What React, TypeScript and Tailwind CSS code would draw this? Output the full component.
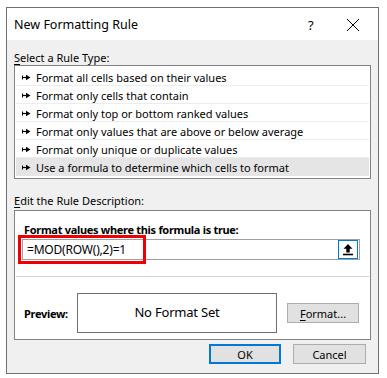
import React from 'react';

const ruleTypes = [
  'Format all cells based on their values',
  'Format only cells that contain',
  'Format only top or bottom ranked values',
  'Format only values that are above or below average',
  'Format only unique or duplicate values',
  'Use a formula to determine which cells to format',
];

const RuleArrow = () => (
  <svg width="9" height="7" viewBox="0 0 9 7" className="shrink-0">
    <path d="M0.5 1.5V5.5" stroke="#000" strokeWidth="1" />
    <path d="M0 3.5H5" stroke="#000" strokeWidth="1.2" />
    <path d="M4 0.8L8.5 3.5L4 6.2Z" fill="#000" />
  </svg>
);

const CollapseIcon = () => (
  <svg width="12" height="13" viewBox="0 0 12 13">
    <path d="M6 1L1.5 5.8H4.3V9.5H7.7V5.8H10.5Z" fill="#000" />
    <path d="M1 11.5H11" stroke="#000" strokeWidth="1.6" />
  </svg>
);

const App: React.FC = () => {
  return (
    <div
      className="w-[387px] h-[378px] bg-white pt-[7px] pl-[6px] text-[11px] text-black"
      style={{ fontFamily: '"Segoe UI", "Noto Sans", sans-serif' }}
    >
      <div className="w-[373px] h-[367px] border border-[#707070] bg-[#f0f0f0] flex flex-col">
        {/* Title bar */}
        <div className="h-[32px] bg-white flex items-center pl-[7px] pt-[2px] shrink-0">
          <span className="text-[12.5px] flex-1 leading-none">New Formatting Rule</span>
          <span className="text-[13px] w-[14px] mr-[24px] leading-none">?</span>
          <svg width="14" height="14" viewBox="0 0 14 14" className="mr-[18px]">
            <path d="M1 1L13 13M13 1L1 13" stroke="#000" strokeWidth="1" />
          </svg>
        </div>

        <div className="px-[7px] flex flex-col">
          {/* Select a Rule Type */}
          <div className="h-[25px] flex items-end pb-[2px] leading-none">
            <span>
              <span className="underline underline-offset-2">S</span>elect a Rule Type:
            </span>
          </div>
          <div className="h-[114px] border border-[#828282] bg-white px-[1px] pt-[2px]">
            {ruleTypes.map((r, i) => (
              <div
                key={r}
                className={`h-[18px] flex items-center gap-[5px] pl-[6px] pt-[1px] ${
                  i < ruleTypes.length - 1 ? 'border-b border-[#ececec]' : 'bg-[#e5e5e5]'
                }`}
              >
                <RuleArrow />
                <span className="leading-none">{r}</span>
              </div>
            ))}
          </div>

          {/* Edit the Rule Description */}
          <div className="h-[31px] flex items-end pb-[4px] leading-none">
            <span>
              <span className="underline underline-offset-2">E</span>dit the Rule Description:
            </span>
          </div>
          <div className="h-[130px] border border-[#828282] bg-white flex flex-col">
            <div className="h-[27px] flex items-end pl-[9px] pb-[3px] font-bold tracking-[-0.3px] leading-none">
              <span>
                F<span className="underline underline-offset-2">o</span>rmat values where this formula is true:
              </span>
            </div>
            <div className="relative ml-[7px] mr-[10px] mt-[1px] h-[21px] border border-[#a0a0a0] flex items-center">
              <span className="pl-[4px] text-[12px] tracking-[-0.2px] leading-none flex-1">=MOD(ROW(),2)=1</span>
              <div className="w-[20px] h-[19px] border border-[#0078d7] flex items-center justify-center mr-[1px]">
                <CollapseIcon />
              </div>
              <div className="absolute -left-[5px] -top-[5px] w-[128px] h-[29px] border-[3px] border-[#ee0000]" />
            </div>
            <div className="mt-[16px] h-px bg-[#d4d4d4] mx-[1px]" />
            <div className="flex items-center pl-[9px] mt-[16px]">
              <span className="font-bold tracking-[-0.3px] w-[53px] leading-none">Preview:</span>
              <div className="w-[200px] h-[40px] border border-[#6f6f6f] flex items-center justify-center text-[13px] tracking-[-0.2px]">
                No Format Set
              </div>
              <div className="ml-[10px] w-[72px] h-[20px] bg-[#e1e1e1] border border-[#adadad] flex items-center justify-center leading-none">
                <span>
                  <span className="underline underline-offset-2">F</span>ormat...
                </span>
              </div>
            </div>
          </div>

          {/* Buttons */}
          <div className="flex justify-end gap-[12px] pr-[5px] mt-[4px]">
            <div className="w-[72px] h-[20px] bg-[#e1e1e1] border-2 border-[#0078d7] flex items-center justify-center leading-none">
              OK
            </div>
            <div className="w-[73px] h-[20px] bg-[#e1e1e1] border border-[#adadad] flex items-center justify-center leading-none">
              Cancel
            </div>
          </div>
        </div>
      </div>
    </div>
  );
};

export default App;
